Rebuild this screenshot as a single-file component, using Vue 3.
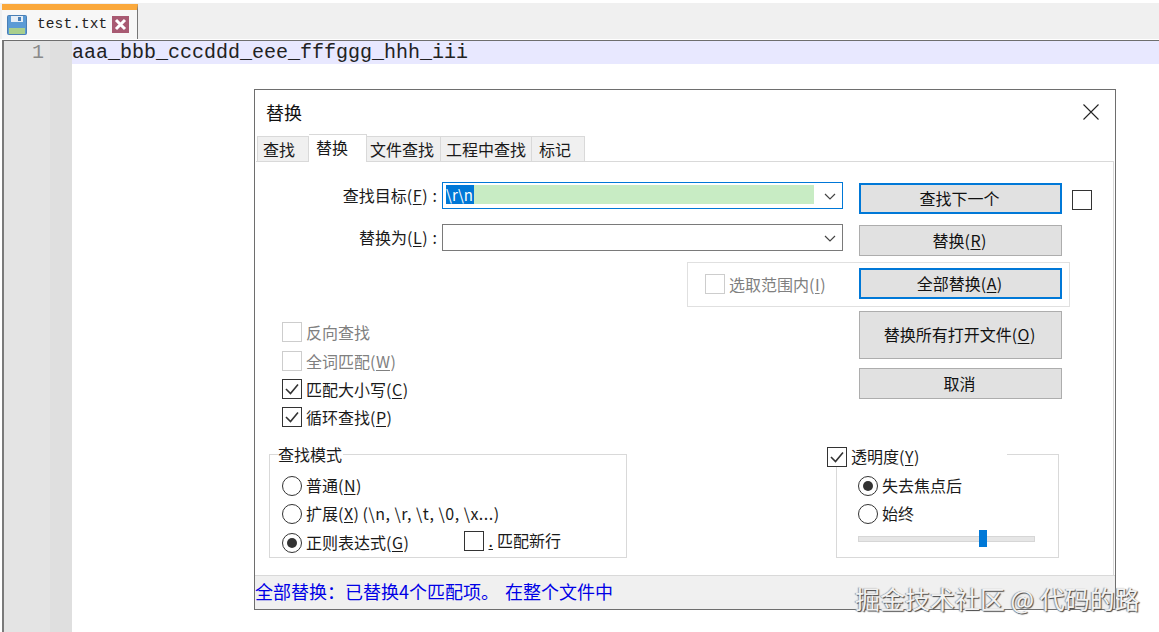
<script setup>
const tabs = [
  { label: '查找', width: 52, pad: 5 },
  { label: '替换', width: 58, pad: 7, active: true },
  { label: '文件查找', width: 74, pad: 3 },
  { label: '工程中查找', width: 91, pad: 5 },
  { label: '标记', width: 53, pad: 7 },
]
const options = [
  { text: '反向查找', key: '', disabled: true },
  { text: '全词匹配(', key: 'W', tail: ')', disabled: true },
  { text: '匹配大小写(', key: 'C', tail: ')', checked: true },
  { text: '循环查找(', key: 'P', tail: ')', checked: true },
]
</script>

<template>
  <div class="app">
    <header class="tabbar">
      <div class="filetab">
        <svg class="save" width="20" height="20" viewBox="0 0 20 20">
          <rect x="0.5" y="0.5" width="19" height="19" rx="1" fill="#5b9bd5" stroke="#4a7fb5" />
          <rect x="4" y="1" width="12" height="6" fill="#e6eef6" />
          <rect x="11" y="2" width="3" height="4" fill="#4a7fb5" />
          <rect x="2" y="13" width="16" height="6" fill="#a9cf8c" />
        </svg>
        <span class="filename">test.txt</span>
        <svg class="tabclose" width="17" height="17" viewBox="0 0 17 17">
          <rect width="17" height="17" fill="#a85a72" />
          <path d="M4 4L13 13M13 4L4 13" stroke="#fff" stroke-width="3" />
        </svg>
      </div>
    </header>

    <main class="editor">
      <div class="gutter">
        <div class="lineno">1</div>
      </div>
      <div class="code">
        <div class="line">aaa_bbb_cccddd_eee_fffggg_hhh_iii</div>
      </div>
    </main>

    <section class="dialog">
      <div class="titlebar">
        <span class="title">替换</span>
        <svg class="close" width="16" height="16" viewBox="0 0 16 16">
          <path d="M0.5 0.5L15.5 15.5M15.5 0.5L0.5 15.5" stroke="#222" stroke-width="1.1" fill="none" />
        </svg>
      </div>

      <nav class="tabs">
        <div
          v-for="t in tabs"
          :key="t.label"
          class="tab"
          :class="{ active: t.active }"
          :style="{ width: t.width + 'px', paddingLeft: t.pad + 'px' }"
        >{{ t.label }}</div>
      </nav>

      <div class="panel">
        <div class="row row1">
          <label class="flabel">查找目标(<u>F</u>)<span class="colon">:</span></label>
          <div class="combo focus">
            <div class="fill"><span class="sel">\r\n</span></div>
            <svg class="chev" width="12" height="7" viewBox="0 0 12 7"><path d="M1 1L6 6L11 1" fill="none" stroke="#444" stroke-width="1.2" /></svg>
          </div>
          <button class="btn primary">查找下一个</button>
          <span class="box darkbox side"></span>
        </div>

        <div class="row row2">
          <label class="flabel">替换为(<u>L</u>)<span class="colon">:</span></label>
          <div class="combo">
            <svg class="chev" width="12" height="7" viewBox="0 0 12 7"><path d="M1 1L6 6L11 1" fill="none" stroke="#444" stroke-width="1.2" /></svg>
          </div>
          <button class="btn">替换(<u>R</u>)</button>
        </div>

        <div class="selgroup">
          <span class="box"></span>
          <span class="muted seltext">选取范围内(<u>I</u>)</span>
          <button class="btn primary">全部替换(<u>A</u>)</button>
        </div>

        <div class="middle">
          <div class="checks">
            <div v-for="o in options" :key="o.text" class="check">
              <span class="box" :class="{ darkbox: !o.disabled }">
                <svg v-if="o.checked" width="18" height="18" viewBox="0 0 18 18"><path d="M3 9L7.5 13.5L15 4.5" fill="none" stroke="#333" stroke-width="1.6" /></svg>
              </span>
              <span :class="{ muted: o.disabled }">{{ o.text }}<u v-if="o.key">{{ o.key }}</u>{{ o.tail }}</span>
            </div>
          </div>
          <div class="actions">
            <button class="btn tall">替换所有打开文件(<u>O</u>)</button>
            <button class="btn">取消</button>
          </div>
        </div>

        <div class="bottom">
          <div class="modes">
            <span class="legend">查找模式</span>
            <div class="radio"><span class="dot"></span><span class="rtext">普通(<u>N</u>)</span></div>
            <div class="radio"><span class="dot"></span><span class="rtext">扩展(<u>X</u>) <span class="latin">(\n, \r, \t, \0, \x...)</span></span></div>
            <div class="radio lastradio">
              <span class="dot on"></span><span class="rtext regex">正则表达式(<u>G</u>)</span>
              <span class="box darkbox newline"></span><span class="rtext nl"><u>.</u> 匹配新行</span>
            </div>
          </div>

          <div class="opacity">
            <div class="ophead">
              <span class="box darkbox">
                <svg width="18" height="18" viewBox="0 0 18 18"><path d="M3 9L7.5 13.5L15 4.5" fill="none" stroke="#333" stroke-width="1.6" /></svg>
              </span>
              <span class="rtext optitle">透明度(<u>Y</u>)</span>
            </div>
            <div class="opbody">
              <div class="radio"><span class="dot on"></span><span class="rtext">失去焦点后</span></div>
              <div class="radio"><span class="dot"></span><span class="rtext">始终</span></div>
              <div class="slider"><span class="thumb"></span></div>
            </div>
          </div>
        </div>
      </div>

      <footer class="status">全部替换：已替换4个匹配项。<span class="where">在整个文件中</span></footer>
    </section>

    <div class="watermark">掘金技术社区 @ 代码的路</div>
  </div>
</template>

<style>
html, body { margin: 0; background: #fff; overflow: hidden; }
</style>

<style scoped>
.app {
  position: relative;
  width: 1159px;
  height: 632px;
  overflow: hidden;
  background: #fff;
  font-family: "Noto Sans CJK SC", "Noto Sans", sans-serif;
  font-size: 16px;
  color: #1a1a1a;
}
u { text-underline-offset: 2px; margin: 0 0.5px; }
.colon { margin: 0 1px 0 5px; }

.tabbar {
  height: 36px;
  margin-top: 3px;
  background: #f0f0f0;
  padding: 1px 0 0 2px;
  box-sizing: border-box;
}
.filetab {
  width: 136px;
  height: 35px;
  box-sizing: border-box;
  border-top: 6px solid #fba93c;
  border-right: 1px solid #777;
  background: #f7f7f7;
  display: flex;
  align-items: center;
  padding-left: 5px;
}
.save { flex: none; margin-top: 1px; }
.filename {
  font-family: "Liberation Mono", monospace;
  font-size: 14.5px;
  color: #222;
  margin: -2px 0 0 10px;
  letter-spacing: 0.1px;
  white-space: nowrap;
}
.tabclose { flex: none; margin-left: 5px; }

.editor {
  margin: 1px 0 0 2px;
  height: 592px;
  border-left: 2px solid #7a7a7a;
  border-top: 1px solid #6e6e6e;
  display: flex;
  box-sizing: border-box;
}
.gutter {
  width: 68px;
  flex: none;
  background: linear-gradient(90deg, #e4e4e4 0 46px, #dfdfdf 46px);
}
.lineno {
  height: 23px;
  line-height: 23px;
  font-family: "Liberation Mono", monospace;
  font-size: 20px;
  color: #8a8a8a;
  text-align: right;
  padding-right: 28px;
}
.code { flex: 1; }
.line {
  height: 23px;
  line-height: 23px;
  background: #e8e8ff;
  font-family: "Liberation Mono", monospace;
  font-size: 20px;
  color: #222;
}

/* floating dialog */
.dialog {
  position: absolute;
  left: 254px;
  top: 89px;
  width: 862px;
  height: 521px;
  box-sizing: border-box;
  border: 1px solid #6e6e6e;
  background: #fff;
  display: flex;
  flex-direction: column;
}
.titlebar {
  height: 44px;
  flex: none;
  display: flex;
  justify-content: space-between;
  align-items: center;
  padding: 0 16px 0 11px;
  box-sizing: border-box;
}
.title { font-size: 18px; color: #111; }
.close { flex: none; }
.tabs {
  display: flex;
  align-items: flex-end;
  height: 27px;
  flex: none;
  margin-left: 2px;
  position: relative;
  z-index: 1;
}
.tab {
  height: 25px;
  line-height: 25px;
  box-sizing: border-box;
  border: 1px solid #d9d9d9;
  border-left-width: 0;
  border-bottom: 0;
  background: #f0f0f0;
  white-space: nowrap;
}
.tab:first-child { border-left-width: 1px; }
.tab.active {
  height: 28px;
  margin-bottom: -1px;
  line-height: 24px;
  background: #fff;
}
.panel {
  flex: 1;
  margin: 0 1px;
  box-sizing: border-box;
  border-top: 1px solid #d9d9d9;
  border-right: 1px solid #d9d9d9;
  min-height: 0;
}

.row {
  display: grid;
  grid-template-columns: 182px 401px 203px 20px;
  align-items: start;
}
.row1 { margin-top: 20px; height: 32px; }
.row2 { margin-top: 10px; height: 32px; }
.flabel {
  text-align: right;
  line-height: 27px;
  white-space: nowrap;
}
.combo {
  margin-left: 4px;
  height: 27px;
  width: 401px;
  box-sizing: border-box;
  border: 1px solid #7a7a7a;
  background: #fff;
  position: relative;
}
.combo.focus { border-color: #0078d7; }
.fill {
  position: absolute;
  left: 3px;
  top: 2px;
  width: 368px;
  height: 19px;
  background: #c8ecc4;
}
.sel {
  display: inline-block;
  height: 19px;
  line-height: 19px;
  font-size: 15px;
  padding-right: 1px;
  background: #0078d7;
  color: #fff;
  vertical-align: top;
}
.chev { position: absolute; right: 6px; top: 10px; }
.btn {
  display: block;
  margin: 1px 0 0 20px;
  width: 203px;
  height: 31px;
  box-sizing: border-box;
  border: 1px solid #adadad;
  background: #e1e1e1;
  color: #111;
  font: inherit;
  line-height: 27px;
  padding: 0 2px 0 0;
}
.btn.primary { border: 2px solid #0078d7; }
.box {
  width: 20px;
  height: 20px;
  flex: none;
  box-sizing: border-box;
  border: 1px solid #cdcdcd;
  background: #fff;
  display: inline-flex;
  align-items: center;
  justify-content: center;
}
.darkbox { border-color: #333; }
.side { margin: 8px 0 0 30px; }
.muted { color: #808080; }

.selgroup {
  margin: 6px 0 0 431px;
  width: 383px;
  height: 45px;
  box-sizing: border-box;
  border: 1px solid #e0e0e0;
  display: flex;
  align-items: center;
  padding: 0 0 2px 17px;
}
.seltext { margin-left: 4px; width: 130px; white-space: nowrap; }
.selgroup .btn { margin: 0; }

.middle {
  display: flex;
  justify-content: space-between;
  width: 806px;
  margin-top: 4px;
}
.checks { padding: 7px 0 0 26px; }
.check {
  display: flex;
  align-items: center;
  gap: 4px;
  height: 28.4px;
  white-space: nowrap;
}
.actions { display: flex; flex-direction: column; }
.actions .btn { margin: 9px 0 0 0; }
.actions .btn.tall { height: 48px; margin-top: 0; padding-bottom: 2px; line-height: 42px; }

.bottom {
  display: flex;
  margin-top: 15px;
  padding-left: 13px;
}
.modes {
  width: 358px;
  height: 104px;
  margin-top: 7px;
  padding-left: 12px;
  box-sizing: border-box;
  border: 1px solid #d9d9d9;
  position: relative;
  flex: none;
}
.legend {
  position: absolute;
  left: 8px;
  top: -11px;
  background: #fff;
  line-height: 20px;
  padding-right: 1px;
}
.radio {
  display: flex;
  align-items: center;
  gap: 4px;
  height: 28px;
  white-space: nowrap;
}
.rtext { padding-bottom: 2px; }
.modes .radio:first-of-type { margin-top: 17px; }
.latin { letter-spacing: 0.5px; }
.dot {
  width: 20px;
  height: 20px;
  flex: none;
  box-sizing: border-box;
  border: 1px solid #333;
  border-radius: 50%;
  background: #fff;
  position: relative;
}
.dot.on::after {
  content: "";
  position: absolute;
  left: 4px;
  top: 4px;
  width: 10px;
  height: 10px;
  border-radius: 50%;
  background: #333;
}
.lastradio { height: 30px; }
.regex { width: 154px; }
.newline { margin-top: -4px; }
.nl { margin-top: -4px; }

.opacity {
  position: relative;
  margin-left: 200px;
  width: 231px;
  height: 111px;
  flex: none;
}
.ophead {
  display: flex;
  align-items: center;
  gap: 4px;
  height: 20px;
  width: 180px;
  background: #fff;
  position: relative;
  z-index: 1;
}
.optitle { white-space: nowrap; }
.opbody {
  margin: -13px 0 0 9px;
  width: 223px;
  height: 104px;
  box-sizing: border-box;
  border: 1px solid #d9d9d9;
  padding: 17px 0 0 21px;
}
.slider {
  position: relative;
  width: 177px;
  height: 6px;
  margin-top: 8px;
  background: #e6e6e6;
  border: 1px solid #d6d6d6;
  box-sizing: border-box;
}
.thumb {
  position: absolute;
  left: 120px;
  top: -7px;
  width: 8px;
  height: 17px;
  background: #0078d7;
}

.status {
  height: 34px;
  flex: none;
  box-sizing: border-box;
  border-top: 1px solid #d9d9d9;
  background: #f0f0f0;
  color: #0000e6;
  font-size: 18px;
  line-height: 31px;
  white-space: nowrap;
}
.where { margin-left: 6px; }

.watermark {
  position: absolute;
  left: 855px;
  top: 580px;
  font-size: 25px;
  line-height: 36px;
  white-space: nowrap;
  color: #f2f2f2;
  text-shadow: 1px 1px 1px #444, -1px 0 1px #999;
}
</style>
